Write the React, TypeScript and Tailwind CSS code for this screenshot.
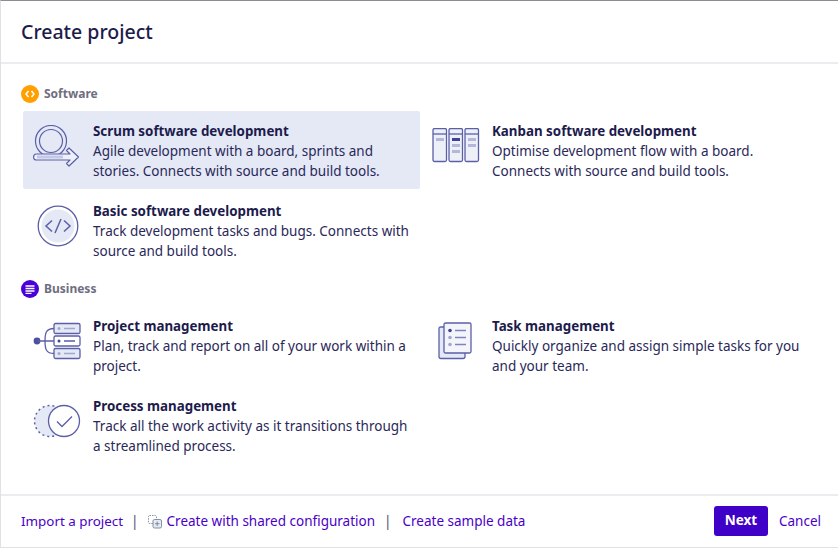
import React from 'react';

const FONT = "font-['Noto_Sans','Open_Sans',sans-serif]";
const STROKE = '#5b5fa8';
const FILL = '#e4e9f5';

const ScrumIcon = () => (
  <svg width="48" height="42" viewBox="0 0 48 42" fill="none" stroke={STROKE} strokeWidth="1.2" strokeLinejoin="round">
    <circle cx="18" cy="16" r="15.500" />
    <circle cx="18" cy="16" r="11.500" />
    <path d="M3.500 29H37L33.500 25.500 36 23 45.500 32 36 41 33.500 38.500 37 35H3.500Q0.600 35 0.600 32T3.500 29z" fill="#eef1f9" />
    <path d="M4 30.500H30V33.500H4z" fill="#c5c9e6" stroke="none" />
  </svg>
);

const KanbanIcon = () => (
  <svg width="48" height="36" viewBox="0 0 48 36" fill="none" stroke={STROKE} strokeWidth="1.300">
    {[1, 17, 33].map((x) => (
      <g key={x}>
        <rect x={x} y="0.500" width="13.500" height="33" rx="1.500" fill="#eef0f8" />
        <path d={`M${x} 6h13.500`} />
      </g>
    ))}
    <g stroke="none">
      <rect x="4" y="10" width="8" height="3" fill="#b3b7d8" />
      <rect x="20" y="10" width="8" height="3" fill="#3f4296" />
      <rect x="20" y="16" width="8" height="3" fill="#b3b7d8" />
      <rect x="20" y="22" width="8" height="3" fill="#b3b7d8" />
      <rect x="36" y="10" width="8" height="3" fill="#b3b7d8" />
      <rect x="36" y="16" width="8" height="3" fill="#b3b7d8" />
    </g>
  </svg>
);

const BasicIcon = () => (
  <svg className="ml-[4px]" width="42" height="42" viewBox="0 0 42 42" fill="none" stroke={STROKE}>
    <circle cx="21" cy="21" r="19.800" strokeWidth="1.300" fill="#fff" />
    <circle cx="21" cy="21" r="16.500" stroke="none" fill={FILL} />
    <path d="M15 15.500L9 21l6 5.500M27 15.500L33 21l-6 5.500M24 14L18 28" strokeWidth="1.500" />
  </svg>
);

const ProjectIcon = () => (
  <svg width="48" height="38" viewBox="0 0 48 38" fill="none" stroke={STROKE} strokeWidth="1.300">
    <circle cx="4" cy="19" r="3.400" fill="#4b4f9e" stroke="none" />
    <path d="M4.500 19H21M12 19C12 11 13 6.500 21 6.500M12 19c0 8 1 12.500 9 12.500" />
    <rect x="21" y="1.500" width="26" height="10" rx="1.500" fill={FILL} />
    <rect x="21" y="14" width="26" height="10" rx="1.500" fill="#fff" />
    <rect x="21" y="26.500" width="26" height="10" rx="1.500" fill={FILL} />
    <circle cx="26" cy="6.500" r="1.500" fill="#a3a7cf" stroke="none" />
    <circle cx="26" cy="19" r="1.500" fill="#3f4296" stroke="none" />
    <circle cx="26" cy="31.500" r="1.500" fill="#a3a7cf" stroke="none" />
    <path d="M31 6.500h11M31 31.500h11" stroke="#a3a7cf" />
    <path d="M31 19h11" stroke="#3f4296" />
  </svg>
);

const TaskIcon = () => (
  <svg className="ml-[6px]" width="34" height="38" viewBox="0 0 34 38" fill="none" stroke={STROKE} strokeWidth="1.300">
    <path d="M6 5H2.500Q1 5 1 6.500V34.500Q1 36.500 3 36.500H25Q27 36.500 27 34.500V31" fill={FILL} />
    <rect x="6" y="1" width="27" height="30" rx="1.500" fill="#f4f5fb" />
    <circle cx="12" cy="8.500" r="1.800" fill="#3f4296" stroke="none" />
    <circle cx="12" cy="15.500" r="1.800" fill="#a3a7cf" stroke="none" />
    <circle cx="12" cy="22.500" r="1.800" fill="#a3a7cf" stroke="none" />
    <path d="M17 8.500h11M17 15.500h11M17 22.500h11" stroke="#7f83bb" />
  </svg>
);

const ProcessIcon = () => (
  <svg width="48" height="36" viewBox="0 0 48 36" fill="none">
    <circle cx="17" cy="18" r="15.500" fill={FILL} stroke={STROKE} strokeWidth="1.500" strokeDasharray="2 3" />
    <circle cx="31" cy="18" r="15.500" fill="#fff" stroke={STROKE} strokeWidth="1.300" />
    <path d="M24 18.500l5 5 10-10" stroke={STROKE} strokeWidth="1.300" />
  </svg>
);

const SharedIcon = () => (
  <svg width="14" height="14" viewBox="0 0 14 14" fill="none" stroke="#6b778c" strokeWidth="0.800">
    <rect x="0.500" y="0.500" width="8" height="8" rx="1" strokeDasharray="1.500 1" />
    <rect x="5" y="4.500" width="8.500" height="8.500" rx="1.500" fill="#e4e9f5" />
    <path d="M9.200 6.500v4.500M7 8.700h4.500" />
  </svg>
);

const Section = ({ color, icon, label }: { color: string; icon: React.ReactNode; label: string }) => (
  <div className="flex h-[18px] items-center gap-[5px]">
    <span className={`flex h-[18px] w-[18px] items-center justify-center rounded-full ${color}`}>{icon}</span>
    <span className="text-[12px] font-bold text-[#6e6e80]">{label}</span>
  </div>
);

const Item = ({ icon, title, lines, selected }: { icon: React.ReactNode; title: string; lines: string[]; selected?: boolean }) => (
  <div className={`flex h-[78px] rounded-[2px] pt-[10px] ${selected ? 'bg-[#e4e9f5]' : ''}`}>
    <div className="flex h-[50px] w-[70px] shrink-0 items-center pl-[10px]">{icon}</div>
    <div className="text-[13.5px] leading-[20px] text-[#2a2859] whitespace-nowrap">
      <div className="text-[13.35px] font-bold text-[#1d1b4c]">{title}</div>
      {lines.map((l) => (
        <div key={l}>{l}</div>
      ))}
    </div>
  </div>
);

export default function App() {
  return (
    <div className={`${FONT} flex h-[548px] w-[838px] flex-col overflow-hidden border-t border-b border-l border-t-[#8a8d93] border-b-[#dfe1e6] border-l-[#dfe1e6] bg-white`}>
      <header className="flex h-[63px] shrink-0 items-center border-b-2 border-[#ebecf0] pl-[20px]">
        <h1 className="text-[19.5px] font-medium text-[#1d1b4c]">Create project</h1>
      </header>
      <main className="flex-1 pl-[20px] pt-[21px]">
        <Section
          color="bg-[#ff9f00]"
          label="Software"
          icon={
            <svg width="10" height="8" viewBox="0 0 10 8" fill="none" stroke="#fff" strokeWidth="1.500">
              <path d="M3.500 1L1 4l2.500 3M6.500 1L9 4 6.500 7" />
            </svg>
          }
        />
        <div className="mt-[8px] ml-[2px] grid grid-cols-[397px_397px] gap-x-[2px] gap-y-[2px]">
          <Item selected icon={<ScrumIcon />} title="Scrum software development" lines={['Agile development with a board, sprints and', 'stories. Connects with source and build tools.']} />
          <Item icon={<KanbanIcon />} title="Kanban software development" lines={['Optimise development flow with a board.', 'Connects with source and build tools.']} />
          <Item icon={<BasicIcon />} title="Basic software development" lines={['Track development tasks and bugs. Connects with', 'source and build tools.']} />
        </div>
        <div className="mt-[11px]">
          <Section
            color="bg-[#4a00d8]"
            label="Business"
            icon={
              <svg width="10" height="9" viewBox="0 0 10 9" fill="none" stroke="#fff" strokeWidth="1.300">
                <path d="M0.500 1h9M0.500 3.500h9M0.500 6h9M0.500 8.300h6" />
              </svg>
            }
          />
        </div>
        <div className="mt-[8px] ml-[2px] grid grid-cols-[397px_397px] gap-x-[2px] gap-y-[2px]">
          <Item icon={<ProjectIcon />} title="Project management" lines={['Plan, track and report on all of your work within a', 'project.']} />
          <Item icon={<TaskIcon />} title="Task management" lines={['Quickly organize and assign simple tasks for you', 'and your team.']} />
          <Item icon={<ProcessIcon />} title="Process management" lines={['Track all the work activity as it transitions through', 'a streamlined process.']} />
        </div>
      </main>
      <footer className="flex h-[53px] shrink-0 items-center border-t-2 border-[#ebecf0] pl-[20px] pr-[17px] text-[13.5px] text-[#4a00c8]">
        <span className="text-[13.4px]">Import a project</span>
        <span className="ml-[8px] text-[#42526e]">|</span>
        <span className="ml-[9px] mr-[5px]"><SharedIcon /></span>
        <span>Create with shared configuration</span>
        <span className="ml-[9px] text-[#42526e]">|</span>
        <span className="ml-[11px]">Create sample data</span>
        <button className="mb-[2px] ml-auto h-[30px] w-[54px] rounded-[3px] bg-[#3f00c8] font-bold text-white">Next</button>
        <span className="ml-[11px]">Cancel</span>
      </footer>
    </div>
  );
}
